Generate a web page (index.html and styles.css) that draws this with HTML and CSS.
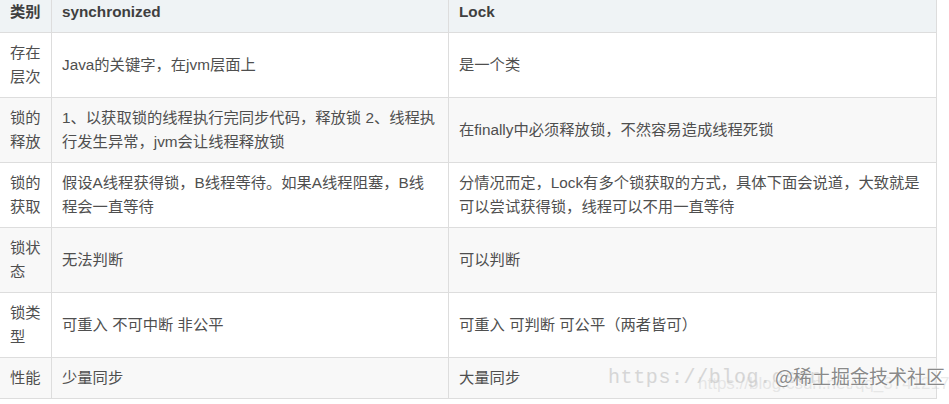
FILE: index.html
```html
<!DOCTYPE html>
<html lang="zh-CN">
<head>
<meta charset="utf-8">
<link rel="stylesheet" href="styles.css">
</head>
<body>
<div class="wrap">
<table class="cmp">
  <colgroup><col class="c1"><col class="c2"><col class="c3"></colgroup>
  <thead>
    <tr><th>类别</th><th>synchronized</th><th>Lock</th></tr>
  </thead>
  <tbody>
    <tr><td>存在层次</td><td>Java的关键字，在jvm层面上</td><td>是一个类</td></tr>
    <tr><td>锁的释放</td><td>1、以获取锁的线程执行完同步代码，释放锁 2、线程执行发生异常，jvm会让线程释放锁</td><td>在finally中必须释放锁，不然容易造成线程死锁</td></tr>
    <tr><td>锁的获取</td><td>假设A线程获得锁，B线程等待。如果A线程阻塞，B线程会一直等待</td><td>分情况而定，Lock有多个锁获取的方式，具体下面会说道，大致就是可以尝试获得锁，线程可以不用一直等待</td></tr>
    <tr><td>锁状态</td><td>无法判断</td><td>可以判断</td></tr>
    <tr><td>锁类型</td><td>可重入 不可中断 非公平</td><td>可重入 可判断 可公平（两者皆可）</td></tr>
    <tr><td>性能</td><td>少量同步</td><td>大量同步</td></tr>
  </tbody>
</table>
<div class="wm-url">https://blog.csdn</div>
<div class="wm-url2">https://blog.csdn.net/qq_3741217</div>
<div class="wm-brand">@稀土掘金技术社区</div>
</div>
</body>
</html>
```
FILE: styles.css
```css
html, body {
  margin: 0;
  padding: 0;
  background: #ffffff;
}
.wrap {
  position: relative;
  width: 949px;
  height: 404px;
  overflow: hidden;
}
.cmp {
  border-collapse: collapse;
  table-layout: fixed;
  width: 938px;
  margin-left: -1px;
  margin-top: -9px;
  font-family: "Liberation Sans", "Noto Sans CJK SC", sans-serif;
  font-size: 15.3px;
  line-height: 24px;
  color: #4f4f4f;
}
.c1 { width: 52px; }
.c2 { width: 397px; }
.c3 { width: 488px; }
.cmp th, .cmp td {
  border: 1px solid #dddddd;
  padding: 8px 10px;
  text-align: left;
  vertical-align: middle;
  word-break: break-all;
}
.cmp th {
  background: #eff3f5;
  color: #3f3f3f;
  font-weight: bold;
}
.cmp tbody tr:nth-child(odd) td { background: #ffffff; }
.cmp tbody tr:nth-child(even) td { background: #f8f8f8; }
.wm-url {
  position: absolute;
  left: 608px;
  top: 366px;
  font-family: "Liberation Mono", monospace;
  font-size: 20px;
  line-height: 24px;
  color: #d6d6d6;
  letter-spacing: 0.6px;
}
.wm-url2 {
  position: absolute;
  left: 698px;
  top: 374px;
  font-family: "Liberation Sans", sans-serif;
  font-size: 17px;
  line-height: 20px;
  color: rgba(200, 200, 200, 0.4);
  white-space: nowrap;
}
.wm-brand {
  position: absolute;
  left: 775px;
  top: 363px;
  font-family: "Noto Sans CJK SC", sans-serif;
  font-size: 19px;
  line-height: 26px;
  color: #8a8a8a;
  text-shadow: 0 0 2px #ffffff, 0 0 2px #ffffff;
}
```
